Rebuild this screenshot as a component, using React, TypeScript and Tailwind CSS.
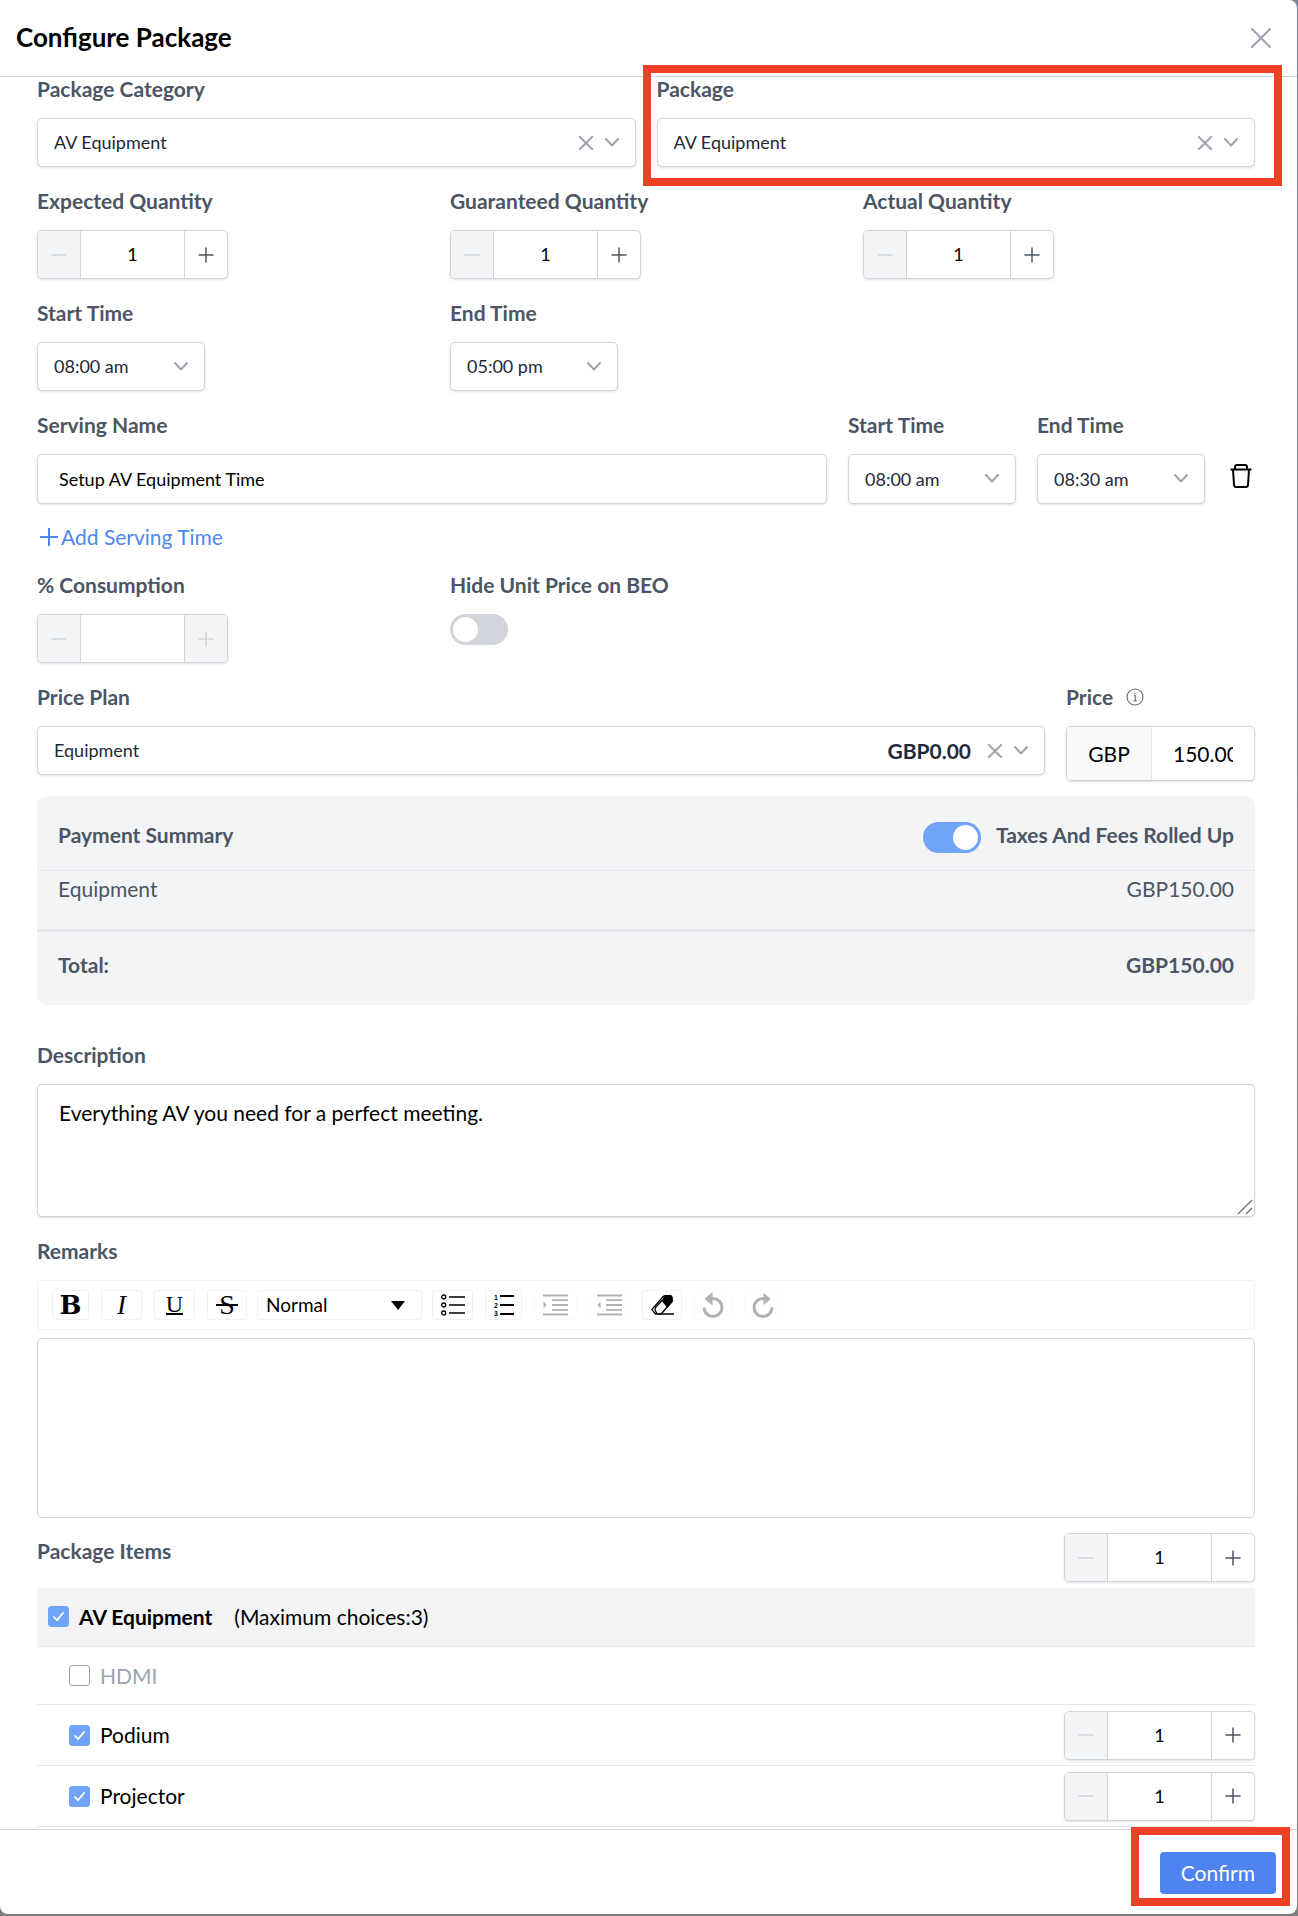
import type { ReactNode } from "react";

const times = ["08:00 am", "08:30 am", "05:00 pm"];

const packageItems = [
  { name: "HDMI", selected: false },
  { name: "Podium", selected: true },
  { name: "Projector", selected: true },
];

function Label({ htmlFor, children }: { htmlFor?: string; children: ReactNode }) {
  return (
    <label htmlFor={htmlFor} className="mb-[18px] block text-[21px] leading-[22px] font-bold text-[#4b5563]">
      {children}
    </label>
  );
}

function CrossIcon({ className }: { className: string }) {
  return (
    <svg viewBox="0 0 20 20" className={className} fill="none" stroke="currentColor" strokeLinecap="round">
      <path d="M1 1l18 18M19 1L1 19" />
    </svg>
  );
}

function ChevronIcon() {
  return (
    <svg
      viewBox="0 0 14 10"
      className="h-[10px] w-[14px] text-[#9ca3af]"
      fill="none"
      stroke="currentColor"
      strokeWidth="2"
      strokeLinecap="round"
      strokeLinejoin="round"
    >
      <path d="M1 1l6 6.500 6-6.500" />
    </svg>
  );
}

function SelectBox({
  id,
  value,
  options,
  price,
  clearable,
  className = "h-[49px]",
}: {
  id: string;
  value: string;
  options: string[];
  price?: string;
  clearable?: boolean;
  className?: string;
}) {
  return (
    <div className={`relative ${className}`}>
      <select
        id={id}
        defaultValue={value}
        className="size-full appearance-none rounded-[5px] border border-[#d1d5db] bg-white px-4 text-[18px] text-[#1f2937] shadow-sm"
      >
        {options.map((option) => (
          <option key={option}>{option}</option>
        ))}
      </select>
      <div className="pointer-events-none absolute inset-y-0 right-[17px] flex items-center gap-3">
        {price && <span className="mr-[5px] text-[21px] font-bold text-[#1f2937]">{price}</span>}
        {clearable && (
          <button type="button" aria-label="Clear" className="pointer-events-auto text-[#9ca3af]">
            <CrossIcon className="size-[14px] stroke-[2.8]" />
          </button>
        )}
        <ChevronIcon />
      </div>
    </div>
  );
}

function Stepper({ id, value, label, disabled }: { id?: string; value: string; label?: string; disabled?: boolean }) {
  return (
    <div className="flex h-[49px] w-[191px] overflow-hidden rounded-[5px] border border-[#d1d5db] bg-white shadow-sm">
      <button
        type="button"
        disabled
        aria-label="Decrease"
        className="flex w-[43px] items-center justify-center border-r border-[#d1d5db] bg-[#f3f4f6] text-[#d1d5db]"
      >
        <svg viewBox="0 0 16 16" className="size-4" fill="none" stroke="currentColor" strokeWidth="1.5">
          <path d="M0.5 8h15" />
        </svg>
      </button>
      <input
        id={id}
        aria-label={label}
        defaultValue={value}
        className="w-0 min-w-0 flex-1 text-center text-[18px] text-black"
      />
      <button
        type="button"
        disabled={disabled}
        aria-label="Increase"
        className="flex w-[43px] items-center justify-center border-l border-[#d1d5db] text-[#4b5563] disabled:bg-[#f3f4f6] disabled:text-[#d1d5db]"
      >
        <svg viewBox="0 0 16 16" className="size-4" fill="none" stroke="currentColor" strokeWidth="1.5">
          <path d="M0.5 8h15M8 0.5v15" />
        </svg>
      </button>
    </div>
  );
}

function Toggle({ id, checked }: { id: string; checked?: boolean }) {
  return (
    <input
      id={id}
      type="checkbox"
      role="switch"
      defaultChecked={checked}
      className="block h-[31px] w-[58px] appearance-none rounded-full bg-[#d1d5db] p-[3px] before:block before:size-[25px] before:rounded-full before:bg-white checked:bg-[#70a4f6] checked:before:ml-auto"
    />
  );
}

function CheckBox({ id, checked, disabled }: { id: string; checked?: boolean; disabled?: boolean }) {
  return (
    <span className="grid size-[21px] shrink-0">
      <input
        id={id}
        type="checkbox"
        defaultChecked={checked}
        disabled={disabled}
        className="peer col-start-1 row-start-1 size-[21px] appearance-none rounded-[3px] border border-[#9ca3af] bg-white checked:border-[#70a4f6] checked:bg-[#70a4f6]"
      />
      <svg
        viewBox="0 0 21 21"
        className="pointer-events-none invisible col-start-1 row-start-1 size-[21px] peer-checked:visible"
        fill="none"
        stroke="#fff"
        strokeWidth="1.8"
        strokeLinecap="round"
        strokeLinejoin="round"
      >
        <path d="M6 11l3 3.2L15 7" />
      </svg>
    </span>
  );
}

function ToolButton({
  label,
  width,
  disabled,
  children,
}: {
  label: string;
  width: string;
  disabled?: boolean;
  children: ReactNode;
}) {
  return (
    <button
      type="button"
      aria-label={label}
      disabled={disabled}
      className={`flex h-[30px] items-center justify-center rounded-[3px] border border-[#f1f1f1] bg-white text-black disabled:opacity-30 ${width}`}
    >
      {children}
    </button>
  );
}

function Toolbar() {
  return (
    <div className="flex h-[50px] items-center rounded-[3px] border border-[#f1f1f1] pl-[14px]">
      <div className="flex gap-3">
        <ToolButton label="Bold" width="w-[37px]">
          <span className="font-['DejaVu_Serif'] text-[26px] leading-[28px] font-bold">B</span>
        </ToolButton>
        <ToolButton label="Italic" width="w-[41px]">
          <span className="font-['Liberation_Serif'] text-[27px] leading-[28px] italic">I</span>
        </ToolButton>
        <ToolButton label="Underline" width="w-[41px]">
          <span className="border-b-2 border-black font-['Liberation_Serif'] text-[24px] leading-[17px]">U</span>
        </ToolButton>
        <ToolButton label="Strikethrough" width="w-[40px]">
          <svg viewBox="0 0 22 22" className="size-[22px] overflow-visible">
            <text x="11" y="20" textAnchor="middle" fontFamily="Liberation Serif" fontSize="28">
              S
            </text>
            <rect y="10" width="22" height="2" />
          </svg>
        </ToolButton>
      </div>
      <div className="relative mx-[10px] h-[30px] w-[165px]">
        <select
          aria-label="Block type"
          defaultValue="Normal"
          className="size-full appearance-none rounded-[3px] border border-[#f1f1f1] bg-white px-2 text-[19px] text-black"
        >
          <option>Normal</option>
          <option>H1</option>
          <option>Blockquote</option>
        </select>
        <svg viewBox="0 0 14 9" className="pointer-events-none absolute top-[11px] right-[17px] h-[9px] w-[14px]">
          <path d="M0 0h14L7 9z" />
        </svg>
      </div>
      <div className="flex gap-3">
        <ToolButton label="Bulleted list" width="w-[41px]">
          <svg viewBox="0 0 24 22" className="h-[22px] w-6" fill="none" stroke="currentColor" strokeWidth="1.3">
            <circle cx="2.7" cy="3" r="2" />
            <circle cx="2.7" cy="11" r="2" />
            <circle cx="2.7" cy="19" r="2" />
            <path d="M8 3h16M8 11h16M8 19h16" />
          </svg>
        </ToolButton>
        <ToolButton label="Numbered list" width="w-[37px]">
          <svg viewBox="0 0 20 22" className="h-[22px] w-5 overflow-visible">
            <g fontFamily="Liberation Sans" fontSize="7" fontWeight="700">
              <text x="0" y="6">
                1
              </text>
              <text x="0" y="14">
                2
              </text>
              <text x="0" y="22">
                3
              </text>
            </g>
            <path d="M6 2h14M6 11h14M6 20h14" stroke="currentColor" strokeWidth="2" />
          </svg>
        </ToolButton>
        <ToolButton label="Indent" width="w-[43px]" disabled>
          <svg viewBox="0 0 25 22" className="h-[22px] w-[25px]" stroke="currentColor" strokeWidth="1.8">
            <path d="M0 1.5h25M9 6.2h16M9 11h16M9 15.8h16M0 20.5h25" />
            <path d="M0.5 7.5v7L3.5 11z" stroke="none" />
          </svg>
        </ToolButton>
        <ToolButton label="Outdent" width="w-[41px]" disabled>
          <svg viewBox="0 0 25 22" className="h-[22px] w-[25px]" stroke="currentColor" strokeWidth="1.8">
            <path d="M0 1.5h25M9 6.2h16M9 11h16M9 15.8h16M0 20.5h25" />
            <path d="M3.5 7.5v7L0.5 11z" stroke="none" />
          </svg>
        </ToolButton>
        <ToolButton label="Clear formatting" width="w-[40px]">
          <svg viewBox="0 0 23 20" className="h-5 w-[23px]" fill="none" stroke="currentColor" strokeWidth="1.3">
            <path d="M12 1.8Q13 0.7 15 0.7h4Q21.5 1 21 3.5v3L11.5 17.5Q10 19 8 19H4.5L0.8 14.5Z" />
            <path d="M14 1h5.5L21 3.5v3L16.5 12L11.5 6z" fill="currentColor" />
            <path d="M11.5 5L4.5 12.5q-1 1.5 0 3.5l2 3M8 19h15" />
          </svg>
        </ToolButton>
        <ToolButton label="Undo" width="w-[38px]" disabled>
          <svg viewBox="0 0 22 26" className="h-[26px] w-[22px]" fill="none" stroke="currentColor" strokeWidth="3">
            <path d="M2 15.5a9 9 0 1 0 9-9H9" />
            <path d="M2.5 7L10.5 0v13.5z" fill="currentColor" stroke="none" />
          </svg>
        </ToolButton>
        <ToolButton label="Redo" width="w-[38px]" disabled>
          <svg viewBox="0 0 22 26" className="h-[26px] w-[22px]" fill="none" stroke="currentColor" strokeWidth="3">
            <path d="M20 15.5a9 9 0 1 1 -9-9h2" />
            <path d="M19 7L11.5 1v12z" fill="currentColor" stroke="none" />
          </svg>
        </ToolButton>
      </div>
    </div>
  );
}

export default function App() {
  return (
    <div className="min-h-screen bg-linear-to-b from-[#76839a] via-[#858585] to-[#808080] pr-px pb-[2px] font-['Lato',sans-serif]">
      <div className="flex min-h-[calc(100vh-2px)] flex-col rounded-r-lg rounded-bl-lg bg-white">
        <header className="flex h-[77px] items-center justify-between border-b border-[#d1d5db] px-4 pb-px">
          <h1 className="text-[26px] font-bold text-black">Configure Package</h1>
          <button type="button" aria-label="Close" className="mr-[10px] text-[#9ca3af]">
            <CrossIcon className="size-5 stroke-2" />
          </button>
        </header>

        <main className="flex-1 pt-px pr-[42px] pb-[2px] pl-[37px]">
          <div className="grid grid-cols-2 gap-[21px]">
            <div>
              <Label htmlFor="category">Package Category</Label>
              <SelectBox id="category" value="AV Equipment" options={["AV Equipment"]} clearable />
            </div>
            <div className="relative">
              <Label htmlFor="package">Package</Label>
              <SelectBox id="package" value="AV Equipment" options={["AV Equipment"]} clearable />
              <div className="pointer-events-none absolute -top-[13px] -right-[27px] -bottom-[19px] -left-[14px] border-8 border-[#ed4026]" />
            </div>
          </div>

          <div className="mt-[23px] grid grid-cols-3 gap-[21px]">
            <div>
              <Label htmlFor="expected">Expected Quantity</Label>
              <Stepper id="expected" value="1" />
            </div>
            <div>
              <Label htmlFor="guaranteed">Guaranteed Quantity</Label>
              <Stepper id="guaranteed" value="1" />
            </div>
            <div>
              <Label htmlFor="actual">Actual Quantity</Label>
              <Stepper id="actual" value="1" />
            </div>
          </div>

          <div className="mt-[23px] grid grid-cols-3 gap-[21px]">
            <div>
              <Label htmlFor="start">Start Time</Label>
              <SelectBox id="start" value="08:00 am" options={times} className="h-[49px] w-[168px]" />
            </div>
            <div>
              <Label htmlFor="end">End Time</Label>
              <SelectBox id="end" value="05:00 pm" options={times} className="h-[49px] w-[168px]" />
            </div>
          </div>

          <div className="mt-[23px] flex gap-[21px]">
            <div className="flex-1">
              <Label htmlFor="serving">Serving Name</Label>
              <input
                id="serving"
                defaultValue="Setup AV Equipment Time"
                className="h-[50px] w-full rounded-[5px] border border-[#d1d5db] bg-white px-[21px] text-[18px] text-black shadow-sm"
              />
            </div>
            <div>
              <Label htmlFor="serving-start">Start Time</Label>
              <SelectBox id="serving-start" value="08:00 am" options={times} className="h-[50px] w-[168px]" />
            </div>
            <div>
              <Label htmlFor="serving-end">End Time</Label>
              <SelectBox id="serving-end" value="08:30 am" options={times} className="h-[50px] w-[168px]" />
            </div>
            <button type="button" aria-label="Delete serving" className="flex w-[29px] items-end justify-center pb-4">
              <svg viewBox="0 0 22 24" className="h-6 w-[22px]" fill="none" stroke="#000" strokeWidth="2" strokeLinejoin="round">
                <path d="M0.5 5.5h21M5 5V3q0-2 2-2h8q2 0 2 2v2M3 5.5l1 15.5q0.200 2 2 2h10q1.800 0 2-2l1-15.500" />
              </svg>
            </button>
          </div>

          <button type="button" className="mt-5 flex items-center gap-[3px] pl-[3px] text-[21px] leading-[26px] text-[#4f86ef]">
            <svg viewBox="0 0 18 18" className="size-[18px]" stroke="currentColor" strokeWidth="2">
              <path d="M0 9h18M9 0v18" />
            </svg>
            Add Serving Time
          </button>

          <div className="mt-6 grid grid-cols-3 gap-[21px]">
            <div>
              <Label htmlFor="consumption">% Consumption</Label>
              <Stepper id="consumption" value="" disabled />
            </div>
            <div>
              <Label htmlFor="hide-price">Hide Unit Price on BEO</Label>
              <Toggle id="hide-price" />
            </div>
          </div>

          <div className="mt-[23px] flex gap-[21px]">
            <div className="flex-1">
              <Label htmlFor="plan">Price Plan</Label>
              <SelectBox id="plan" value="Equipment" options={["Equipment"]} price="GBP0.00" clearable />
            </div>
            <div className="w-[189px]">
              <Label htmlFor="price">
                <span className="flex items-center gap-[13px]">
                  Price
                  <svg viewBox="0 0 18 18" className="size-[18px]" fill="none" stroke="#6b7280" strokeWidth="1.2">
                    <circle cx="9" cy="9" r="8" />
                    <path d="M8 7.500h1.200v5M7.500 12.800h3.200M8.800 4.500v1.500" />
                  </svg>
                </span>
              </Label>
              <div className="flex h-[55px] overflow-hidden rounded-[5px] border border-[#d1d5db] shadow-sm">
                <span className="flex w-[85px] items-center justify-center border-r border-[#e5e7eb] bg-[#f9fafb] text-[21px] text-black">
                  GBP
                </span>
                <input id="price" defaultValue="150.00" className="w-0 min-w-0 flex-1 px-[21px] text-[21px] text-black" />
              </div>
            </div>
          </div>

          <section className="mt-[15px] rounded-[10px] bg-[#f3f4f6] text-[21px] leading-[26px] text-[#4b5563]">
            <div className="flex h-[75px] items-start border-b border-[#e5e7eb] px-[21px] pt-[26px]">
              <h2 className="flex-1 font-bold">Payment Summary</h2>
              <Toggle id="taxes" checked />
              <label htmlFor="taxes" className="ml-[15px] font-bold">
                Taxes And Fees Rolled Up
              </label>
            </div>
            <div className="flex h-[61px] justify-between border-b-[3px] border-[#e5e7eb] px-[21px] pt-[5px]">
              <span>Equipment</span>
              <span>GBP150.00</span>
            </div>
            <div className="flex h-[73px] justify-between px-[21px] pt-5 font-bold">
              <span>Total:</span>
              <span>GBP150.00</span>
            </div>
          </section>

          <div className="mt-[39px]">
            <Label htmlFor="description">Description</Label>
            <div className="relative">
              <textarea
                id="description"
                defaultValue="Everything AV you need for a perfect meeting."
                className="block h-[133px] w-full resize-none rounded-[5px] border border-[#d1d5db] bg-white px-[21px] py-[14px] text-[21px] leading-[28px] text-black shadow-sm"
              />
              <svg viewBox="0 0 16 16" className="pointer-events-none absolute right-[2px] bottom-[2px] size-4" stroke="#6b6b6b" strokeWidth="1.3">
                <path d="M1 15L15 1M9 15l6-6" />
              </svg>
            </div>
          </div>

          <div className="mt-[23px]">
            <Label htmlFor="remarks">Remarks</Label>
            <Toolbar />
            <textarea
              id="remarks"
              className="mt-2 block h-[180px] w-full resize-none rounded-[5px] border border-[#d1d5db] bg-white px-4 py-2 text-[18px]"
            />
          </div>

          <section className="mt-[15px]">
            <div className="flex h-[55px] items-start justify-between">
              <h2 className="pt-[7px] text-[21px] leading-[22px] font-bold text-[#4b5563]">Package Items</h2>
              <Stepper value="1" label="Package items quantity" />
            </div>
            <div className="flex h-[59px] items-center border-b border-[#e5e7eb] bg-[#f3f4f6] pb-px pl-[11px] text-[21px] text-black">
              <CheckBox id="all-items" checked />
              <label htmlFor="all-items" className="ml-[10px] font-bold">
                AV Equipment
              </label>
              <span className="ml-[22px]">(Maximum choices:3)</span>
            </div>
            {packageItems.map((item) => (
              <div
                key={item.name}
                className={`flex items-center border-b border-[#e5e7eb] pl-8 text-[21px] ${item.selected ? "h-[61px] text-black" : "h-[58px] text-[#9ca3af]"}`}
              >
                <CheckBox id={item.name} checked={item.selected} disabled={!item.selected} />
                <label htmlFor={item.name} className="ml-[10px] flex-1">
                  {item.name}
                </label>
                {item.selected && <Stepper value="1" label={`${item.name} quantity`} />}
              </div>
            ))}
          </section>
        </main>

        <footer className="flex h-[85px] items-center justify-end border-t border-[#d1d5db] pt-px pr-[21px]">
          <div className="relative">
            <button type="button" className="h-[42px] rounded-[4px] bg-[#4f83f0] px-[21px] text-[21px] text-white">
              Confirm
            </button>
            <div className="pointer-events-none absolute -top-[25px] -right-[14px] -bottom-3 -left-[29px] border-8 border-[#ed4026]" />
          </div>
        </footer>
      </div>
    </div>
  );
}
